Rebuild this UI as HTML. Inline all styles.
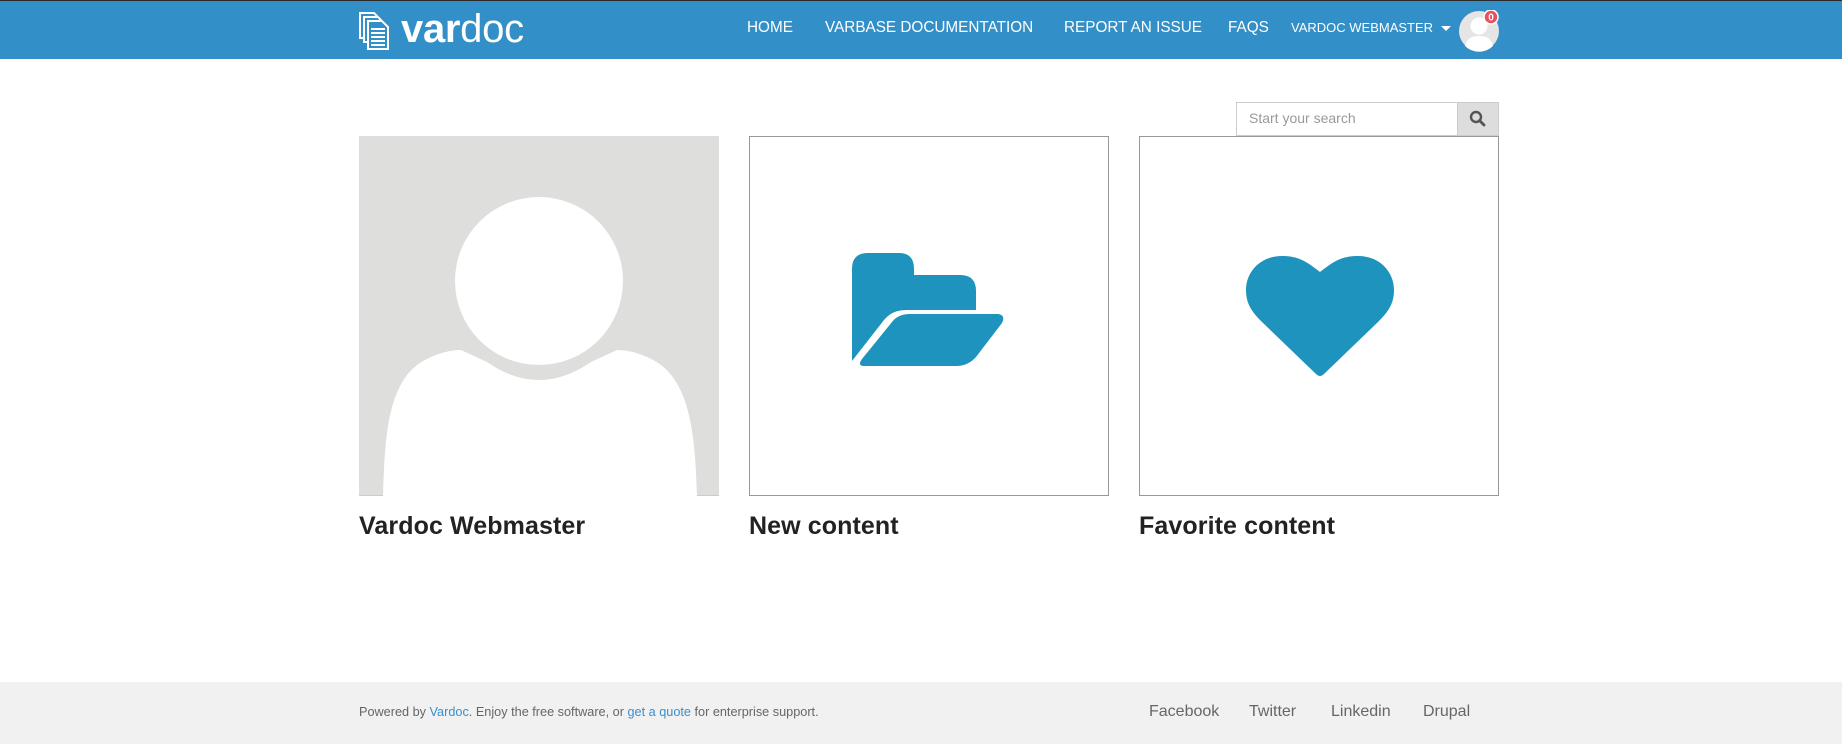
<!DOCTYPE html>
<html><head><meta charset="utf-8"><style>
*{margin:0;padding:0;box-sizing:border-box}
body{width:1842px;height:744px;background:#fff;font-family:"Liberation Sans",sans-serif;position:relative;overflow:hidden}
.hdr{position:absolute;left:0;top:0;width:1842px;height:59px;background:#338fc8;border-top:1px solid #2a2a2a}
.abs{position:absolute;white-space:nowrap}
.nav{color:#fff;font-size:15.3px;top:18px}
.card{position:absolute;top:136px;width:360px;height:360px}
.bx{border:1px solid #999}
.ttl{position:absolute;top:512px;font-size:25px;font-weight:bold;color:#222;letter-spacing:0.1px}
.foot{position:absolute;left:0;top:682px;width:1842px;height:62px;background:#f1f1f1}
.fl{color:#666;font-size:16px;top:21px}
</style></head><body>
<div class="hdr">
<svg class="abs" style="left:358px;top:9px" width="32" height="40" viewBox="0 0 32 40">
<g fill="none" stroke="#fff" stroke-width="2">
<path d="M2 3h14l3 3v22H2z"/><path d="M6 7h14l3 3v22H6z" fill="#338fc8"/><path d="M10 11h14l6 6v22H10z" fill="#338fc8"/>
</g>
<g stroke="#fff" stroke-width="2"><path d="M13 19h14M13 23h14M13 27h14M13 31h14M13 35h14"/></g>
</svg>
<div class="abs" style="left:401px;top:6px;font-size:40px;color:#fff;letter-spacing:-0.3px"><b>var</b><span style="font-weight:300">doc</span></div>
<div class="abs nav" style="left:747px">HOME</div>
<div class="abs nav" style="left:825px">VARBASE DOCUMENTATION</div>
<div class="abs nav" style="left:1064px">REPORT AN ISSUE</div>
<div class="abs nav" style="left:1228px">FAQS</div>
<div class="abs nav" style="left:1291px;font-size:13px;top:19px">VARDOC WEBMASTER <span style="display:inline-block;border:5px solid transparent;border-top:5px solid #fff;vertical-align:middle;margin-top:4px;margin-left:4px"></span></div>
<svg class="abs" style="left:1459px;top:9px" width="42" height="42" viewBox="0 0 42 42">
<circle cx="20" cy="21" r="20" fill="#e5e5e5"/>
<circle cx="20" cy="16" r="8.5" fill="#fff"/>
<path d="M6 36c2-8 7-10 14-10s12 2 14 10a20 20 0 0 1-28 0z" fill="#fff"/>
<circle cx="32" cy="7" r="7" fill="#e9505c" stroke="#fff" stroke-width="1.5"/>
<text x="32" y="10.5" font-size="10" font-weight="bold" fill="#fff" text-anchor="middle" font-family="Liberation Sans">0</text>
</svg>
</div>
<div class="abs" style="left:1236px;top:102px;width:263px;height:34px;border:1px solid #ccc;background:#fff"></div>
<div class="abs" style="left:1249px;top:110px;font-size:14px;color:#999">Start your search</div>
<div class="abs" style="left:1457px;top:102px;width:42px;height:34px;background:#ddd;border:1px solid #ccc"></div>
<svg class="abs" style="left:1469px;top:110px" width="18" height="18" viewBox="0 0 18 18"><circle cx="7" cy="7" r="5" fill="none" stroke="#555" stroke-width="2.4"/><path d="M10.5 10.5L15 15" stroke="#555" stroke-width="2.8" stroke-linecap="round"/></svg>

<div class="card" style="left:359px;background:#dededc;border-bottom:1px solid #ccc">
<svg width="360" height="360" viewBox="0 0 360 360">
<path d="M24 360C26 300 28 240 70 222C80 217 92 214 102 214L128 226Q180 262 232 226L258 214C268 214 280 217 290 222C332 240 336 300 338 360z" fill="#fff"/>
<circle cx="180" cy="145" r="84" fill="#fff"/>
</svg>
</div>
<div class="card bx" style="left:749px">
<svg class="abs" style="left:102px;top:116px" width="156" height="127" viewBox="0 0 156 127">
<path d="M0 16Q0 0 16 0H47Q62 0 62 16V22H108Q124 22 124 38V57H54Q40 57 32 67L0 108z" fill="#1e93bd"/>
<path d="M40 69Q46 61 58 61H146Q154 62 150 70L124 104Q116 113 104 113H12Q5 113 10 106z" fill="#1e93bd"/>
</svg>
</div>
<div class="card bx" style="left:1139px">
<svg class="abs" style="left:106px;top:119px" width="148" height="122" viewBox="0 0 148 122">
<path d="M74 16C60 5 52 0 36 0C14 0 0 16 0 34C0 48 6 56 16 66L70 118Q74 122 78 118L132 66C142 56 148 48 148 34C148 16 134 0 112 0C96 0 88 5 74 16z" fill="#1e93bd"/>
</svg>
</div>
<div class="ttl" style="left:359px">Vardoc Webmaster</div>
<div class="ttl" style="left:749px">New content</div>
<div class="ttl" style="left:1139px">Favorite content</div>

<div class="foot">
<div class="abs" style="left:359px;top:23px;font-size:12.7px;color:#666">Powered by <span style="color:#3a8fc8">Vardoc</span>. Enjoy the free software, or <span style="color:#3a8fc8">get a quote</span> for enterprise support.</div>
<div class="abs fl" style="left:1149px">Facebook</div>
<div class="abs fl" style="left:1249px">Twitter</div>
<div class="abs fl" style="left:1331px">Linkedin</div>
<div class="abs fl" style="left:1423px">Drupal</div>
</div>
</body></html>
